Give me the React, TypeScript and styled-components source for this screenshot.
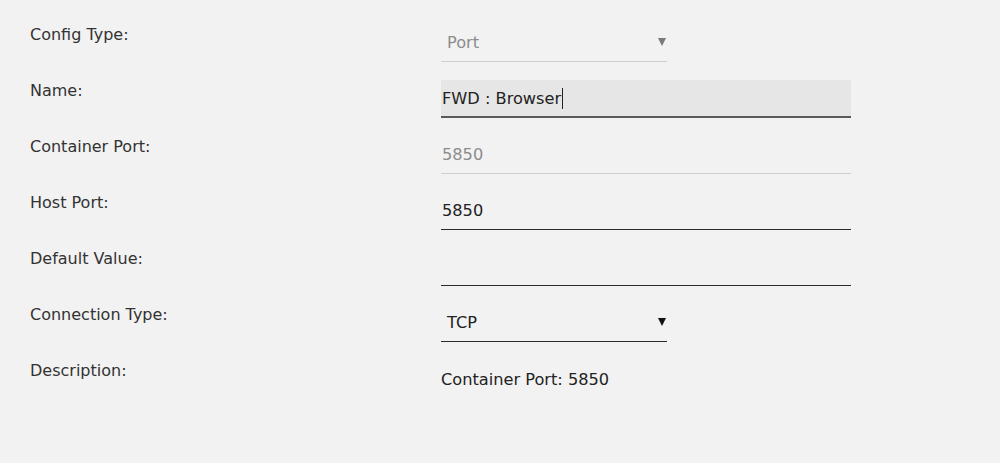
import React from 'react'
import styled, { createGlobalStyle } from 'styled-components'

const GlobalStyle = createGlobalStyle`
  html, body {
    margin: 0;
    padding: 0;
    background: #f2f2f2;
  }
  body {
    font-family: 'DejaVu Sans', 'Liberation Sans', sans-serif;
    color: #2a2a2a;
  }
`

const Form = styled.div`
  width: 1000px;
  height: 463px;
  box-sizing: border-box;
  padding: 6px 0 0 30px;
`

const Row = styled.div`
  display: grid;
  grid-template-columns: 411px 1fr;
  height: 56px;
`

const Label = styled.div`
  align-self: center;
  font-size: 16px;
  color: #333;
`

const Field = styled.div<{ $wide?: boolean; $filled?: boolean; $muted?: boolean; $dark?: boolean }>`
  align-self: end;
  position: relative;
  box-sizing: border-box;
  width: ${p => (p.$wide ? '410px' : '226px')};
  height: 38px;
  display: flex;
  align-items: center;
  padding: 0 1px;
  font-size: 16.2px;
  color: ${p => (p.$muted ? '#8c8c8c' : '#222')};
  background: ${p => (p.$filled ? '#e6e6e6' : 'transparent')};
  border-bottom: ${p => (p.$filled ? '2px solid #595959' : p.$dark ? '1px solid #2b2b2b' : '1px solid #cfcfcf')};
`

const SelectField = styled(Field)`
  padding: 0 22px 0 6px;
`

const Arrow = styled.span<{ $muted?: boolean }>`
  position: absolute;
  right: 1px;
  top: 50%;
  margin-top: -5px;
  width: 0;
  height: 0;
  border-left: 4.5px solid transparent;
  border-right: 4.5px solid transparent;
  border-top: 8px solid ${p => (p.$muted ? '#7a7a7a' : '#111')};
`

const Caret = styled.span`
  display: inline-block;
  width: 1px;
  height: 21px;
  background: #222;
  margin-left: 1px;
`

const Description = styled.div`
  align-self: center;
  margin-top: 18px;
  font-size: 16.2px;
  color: #222;
`

const App: React.FC = () => {
  return (
    <>
      <GlobalStyle />
      <Form>
        <Row>
          <Label>Config Type:</Label>
          <SelectField $muted>
            Port
            <Arrow $muted />
          </SelectField>
        </Row>
        <Row>
          <Label>Name:</Label>
          <Field $wide $filled>
            FWD : Browser
            <Caret />
          </Field>
        </Row>
        <Row>
          <Label>Container Port:</Label>
          <Field $wide $muted>5850</Field>
        </Row>
        <Row>
          <Label>Host Port:</Label>
          <Field $wide $dark>5850</Field>
        </Row>
        <Row>
          <Label>Default Value:</Label>
          <Field $wide $dark />
        </Row>
        <Row>
          <Label>Connection Type:</Label>
          <SelectField $dark>
            TCP
            <Arrow />
          </SelectField>
        </Row>
        <Row>
          <Label>Description:</Label>
          <Description>Container Port: 5850</Description>
        </Row>
      </Form>
    </>
  )
}

export default App
